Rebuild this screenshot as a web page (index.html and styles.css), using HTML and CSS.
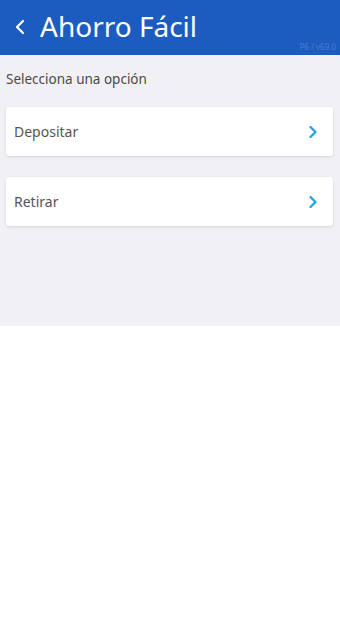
FILE: index.html
```html
<!DOCTYPE html>
<html lang="es">
<head>
<meta charset="utf-8">
<title>Ahorro Fácil</title>
<link rel="stylesheet" href="styles.css">
</head>
<body>
<div class="screen">
  <header class="topbar">
    <svg class="back" width="12" height="16" viewBox="0 0 12 16"><path d="M9 2 L3 8 L9 14" fill="none" stroke="#fff" stroke-width="2.2" stroke-linecap="round" stroke-linejoin="round"/></svg>
    <h1 class="title">Ahorro Fácil</h1>
    <span class="version">P6 / v69.0</span>
  </header>
  <main class="content">
    <p class="label">Selecciona una opción</p>
    <div class="option">
      <span>Depositar</span>
      <svg class="chev" width="10" height="14" viewBox="0 0 10 14"><path d="M2.5 2 L7.5 7 L2.5 12" fill="none" stroke="#1f9fe6" stroke-width="2.2" stroke-linecap="round" stroke-linejoin="round"/></svg>
    </div>
    <div class="option">
      <span>Retirar</span>
      <svg class="chev" width="10" height="14" viewBox="0 0 10 14"><path d="M2.5 2 L7.5 7 L2.5 12" fill="none" stroke="#1f9fe6" stroke-width="2.2" stroke-linecap="round" stroke-linejoin="round"/></svg>
    </div>
  </main>
</div>
</body>
</html>
```
FILE: styles.css
```css
html, body {
  margin: 0;
  padding: 0;
  background: #ffffff;
  font-family: "Noto Sans", "Open Sans", sans-serif;
}
.screen {
  width: 340px;
}
.topbar {
  position: relative;
  height: 55px;
  background: #1c5bbf;
  display: flex;
  align-items: center;
  padding: 0 0 0 14px;
  box-sizing: border-box;
}
.back {
  flex: none;
  margin-top: -2px;
}
.title {
  margin: 0 0 0 14px;
  color: #ffffff;
  font-size: 28px;
  font-weight: 400;
  line-height: 1;
  margin-top: -4px;
}
.version {
  position: absolute;
  right: 4px;
  bottom: 3px;
  font-size: 8px;
  color: rgba(255,255,255,0.22);
}
.content {
  background: #f1f1f5;
  height: 271px;
  padding: 15px 7px 0 6px;
  box-sizing: border-box;
  display: flex;
  flex-direction: column;
  gap: 21px;
}
.label {
  margin: 0 0 -2px 0;
  font-size: 13.5px;
  color: #4a4a4a;
  line-height: 18px;
}
.option {
  height: 49px;
  background: #ffffff;
  border-radius: 3px;
  box-shadow: 0 1px 3px rgba(0,0,0,0.12);
  display: flex;
  align-items: center;
  justify-content: space-between;
  padding: 0 15px 0 8px;
  font-size: 14px;
  color: #555555;
}
.chev {
  flex: none;
}
```
